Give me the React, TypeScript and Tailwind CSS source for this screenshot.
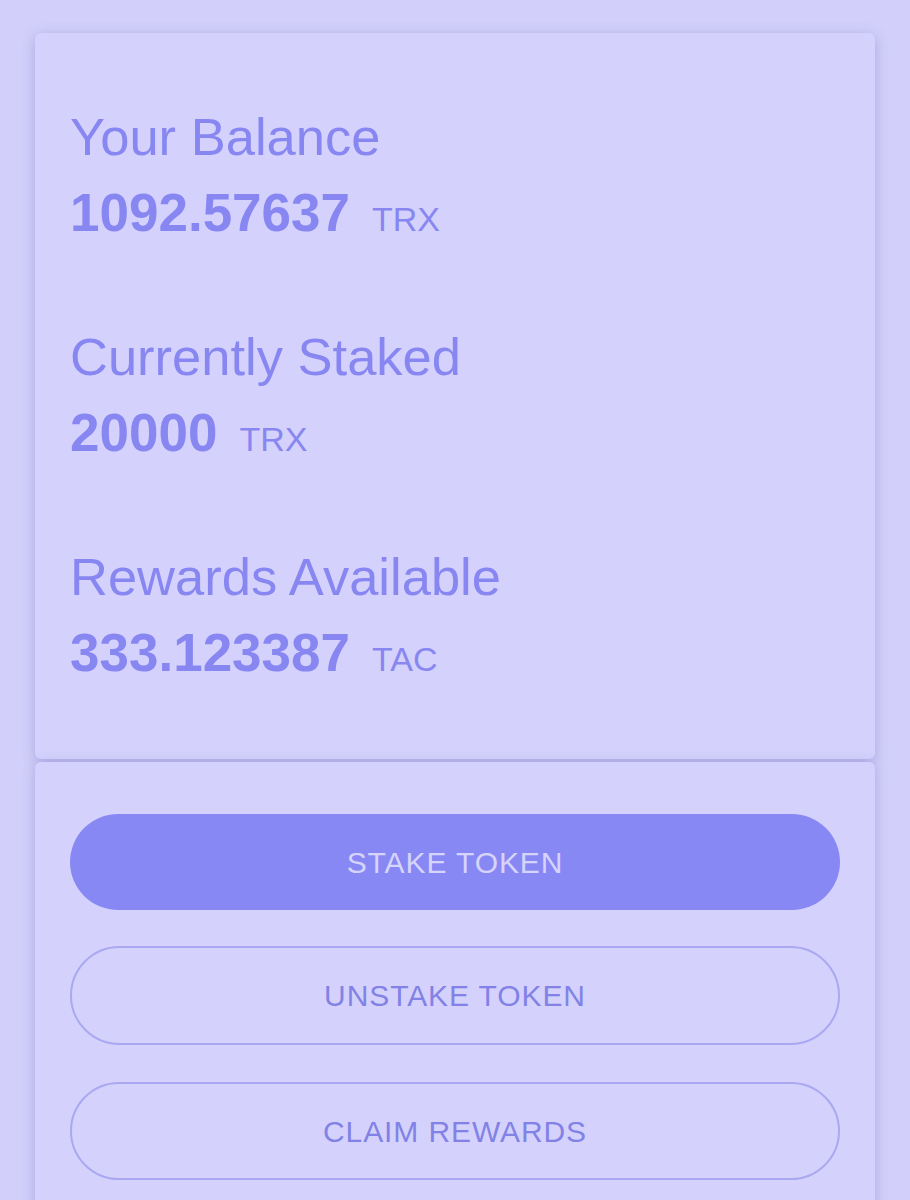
import React from 'react';

type Stat = { label: string; value: string; unit: string };

const stats: Stat[] = [
  { label: 'Your Balance', value: '1092.57637', unit: 'TRX' },
  { label: 'Currently Staked', value: '20000', unit: 'TRX' },
  { label: 'Rewards Available', value: '333.123387', unit: 'TAC' },
];

const StatBlock: React.FC<{ stat: Stat }> = ({ stat }) => (
  <div>
    <div className="text-[52.5px] leading-[60px] font-normal">{stat.label}</div>
    <div className="mt-[16px] text-[53px] leading-[60px] font-bold whitespace-nowrap">
      {stat.value}
      <span className="ml-[22px] text-[34px] leading-none font-normal">{stat.unit}</span>
    </div>
  </div>
);

export default function App() {
  return (
    <div
      className="min-h-[1200px] bg-[#d2d0fa] px-[35px] pt-[33px] text-[#8887f2]"
      style={{ fontFamily: '"Liberation Sans", Arial, sans-serif' }}
    >
      <div className="rounded-[6px] bg-[#d4d2fc] px-[35px] pt-[74px] pb-[76px] shadow-[0_3px_14px_rgba(90,80,170,0.32)]">
        <div className="flex flex-col gap-[84px]">
          {stats.map((s) => (
            <StatBlock key={s.label} stat={s} />
          ))}
        </div>
      </div>

      <div className="mt-[3px] rounded-[6px] bg-[#d4d2fc] px-[35px] pt-[52px] pb-[60px] shadow-[0_3px_14px_rgba(90,80,170,0.32)]">
        <div className="flex flex-col">
          <button className="h-[96px] w-full rounded-full bg-[#8888f5] text-[30px] tracking-[0.9px] text-[#d6d4fb]">
            STAKE TOKEN
          </button>
          <button className="mt-[36px] h-[99px] w-full rounded-full border-2 border-[#a9a8f1] text-[30px] tracking-[0.9px] text-[#8282e6]">
            UNSTAKE TOKEN
          </button>
          <button className="mt-[37px] h-[98px] w-full rounded-full border-2 border-[#a9a8f1] text-[30px] tracking-[0.9px] text-[#8282e6]">
            CLAIM REWARDS
          </button>
        </div>
      </div>
    </div>
  );
}
